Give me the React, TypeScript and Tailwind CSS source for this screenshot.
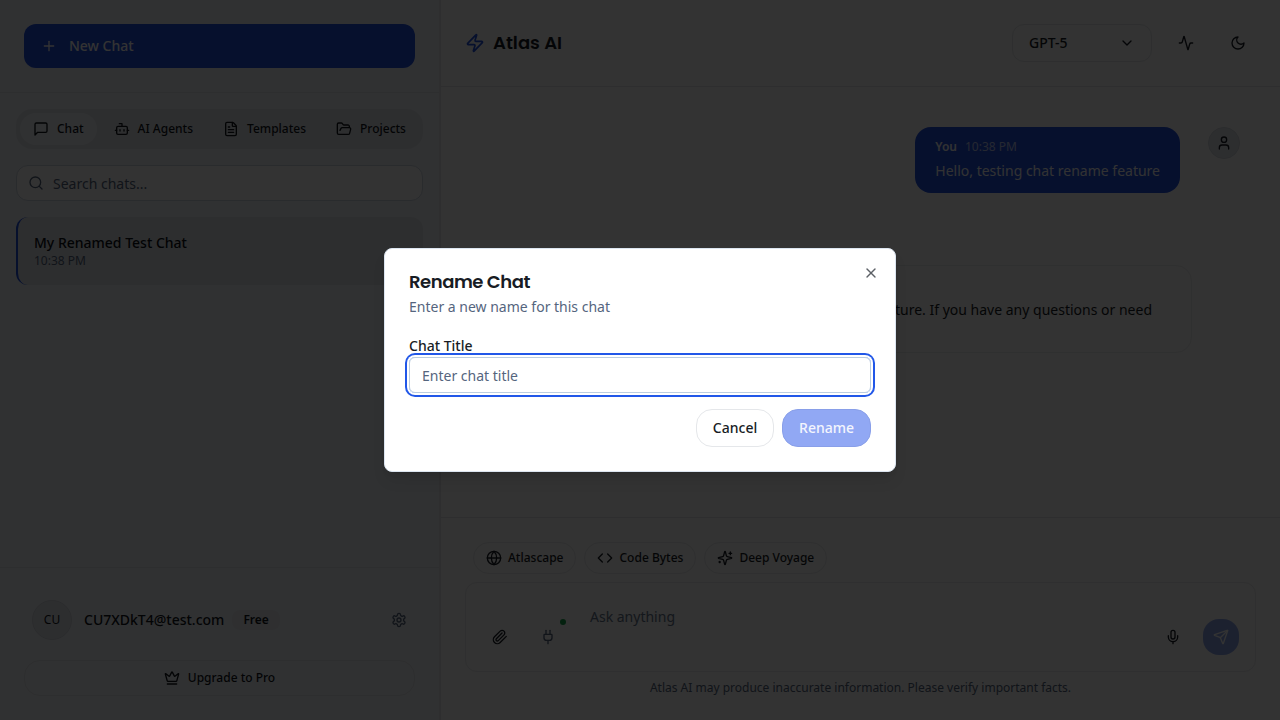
import type { ReactNode } from "react";
import { Activity, Bot, ChevronDown, Code, Crown, FileText, FolderOpen, Globe, Mic, Plug, Plus, Search, Send, User, X, Zap } from "lucide-react";

type IconProps = { className?: string };

function StrokeIcon({ className, children }: { className?: string; children: ReactNode }) {
  return (
    <svg className={className} viewBox="0 0 24 24" fill="none" stroke="currentColor" strokeWidth="2" strokeLinecap="round" strokeLinejoin="round">
      {children}
    </svg>
  );
}

const MessageIcon = ({ className }: IconProps) => (
  <StrokeIcon className={className}>
    <path d="M21 15a2 2 0 0 1-2 2H7l-4 4V5a2 2 0 0 1 2-2h14a2 2 0 0 1 2 2z" />
  </StrokeIcon>
);

const ClipIcon = ({ className }: IconProps) => (
  <StrokeIcon className={className}>
    <path d="m21.44 11.05-9.19 9.19a6 6 0 0 1-8.49-8.49l8.57-8.57A4 4 0 1 1 18 8.84l-8.59 8.57a2 2 0 0 1-2.83-2.83l8.49-8.48" />
  </StrokeIcon>
);

const MoonIcon = ({ className }: IconProps) => (
  <StrokeIcon className={className}>
    <path d="M12 3a6 6 0 0 0 9 9 9 9 0 1 1-9-9Z" />
  </StrokeIcon>
);

const GearIcon = ({ className }: IconProps) => (
  <StrokeIcon className={className}>
    <path d="M12.22 2h-.44a2 2 0 0 0-2 2v.18a2 2 0 0 1-1 1.73l-.43.25a2 2 0 0 1-2 0l-.15-.08a2 2 0 0 0-2.73.73l-.22.38a2 2 0 0 0 .73 2.73l.15.1a2 2 0 0 1 1 1.72v.51a2 2 0 0 1-1 1.74l-.15.09a2 2 0 0 0-.73 2.73l.22.38a2 2 0 0 0 2.73.73l.15-.08a2 2 0 0 1 2 0l.43.25a2 2 0 0 1 1 1.73V20a2 2 0 0 0 2 2h.44a2 2 0 0 0 2-2v-.18a2 2 0 0 1 1-1.73l.43-.25a2 2 0 0 1 2 0l.15.08a2 2 0 0 0 2.73-.73l.22-.39a2 2 0 0 0-.73-2.73l-.15-.08a2 2 0 0 1-1-1.74v-.5a2 2 0 0 1 1-1.74l.15-.09a2 2 0 0 0 .73-2.73l-.22-.38a2 2 0 0 0-2.73-.73l-.15.08a2 2 0 0 1-2 0l-.43-.25a2 2 0 0 1-1-1.73V4a2 2 0 0 0-2-2z" />
    <circle cx="12" cy="12" r="3" />
  </StrokeIcon>
);

const SparkleIcon = ({ className }: IconProps) => (
  <StrokeIcon className={className}>
    <path d="M9.937 15.5A2 2 0 0 0 8.5 14.063l-6.135-1.582a.5.5 0 0 1 0-.962L8.5 9.936A2 2 0 0 0 9.937 8.5l1.582-6.135a.5.5 0 0 1 .963 0L14.063 8.5A2 2 0 0 0 15.5 9.937l6.135 1.581a.5.5 0 0 1 0 .964L15.5 14.063a2 2 0 0 0-1.437 1.437l-1.582 6.135a.5.5 0 0 1-.963 0z" />
    <path d="M20 3v4M22 5h-4M4 17v2M5 18H3" />
  </StrokeIcon>
);

const tabs = [
  { label: "Chat", icon: MessageIcon, active: true },
  { label: "AI Agents", icon: Bot, active: false },
  { label: "Templates", icon: FileText, active: false },
  { label: "Projects", icon: FolderOpen, active: false },
];

function Sidebar() {
  return (
    <aside className="flex h-full w-[441px] shrink-0 flex-col border-r-2 border-[#e5e7eb] bg-[#f1f5f9]">
      <div className="border-b border-[#e2e5ea] p-6">
        <button className="flex h-11 w-full items-center gap-3 rounded-xl bg-[#1f4fe2] px-[17px] text-sm font-medium text-white">
          <Plus className="size-4" />
          New Chat
        </button>
      </div>
      <div className="flex flex-1 flex-col gap-4 p-4">
        <div className="flex h-10 items-center gap-1 rounded-2xl bg-[#e2e6ec] p-1">
          {tabs.map((t) => (
            <button key={t.label} className={`flex h-8 shrink-0 items-center justify-center gap-2 rounded-2xl px-[13px] text-xs font-medium text-[#12161c] ${t.active ? "bg-[#f1f5f9]" : ""}`}>
              <t.icon className="size-4" />
              {t.label}
            </button>
          ))}
        </div>
        <div className="flex h-9 items-center rounded-xl border border-[#cbd5e1] bg-white px-3 text-sm text-[#55657e]">
          <Search className="-ml-px size-4" />
          <span className="ml-[9px] pt-0.5">Search chats...</span>
        </div>
        <div className="flex h-[68px] flex-col justify-center rounded-xl border-l-2 border-[#1f4fe2] bg-[#e2e6ec] px-4">
          <span className="text-sm font-medium leading-5 text-[#0c1017]">My Renamed Test Chat</span>
          <span className="text-xs text-[#55657e]">10:38 PM</span>
        </div>
      </div>
      <div className="flex h-[153px] shrink-0 flex-col gap-3 border-t border-[#e2e5ea] p-6">
        <div className="flex h-14 items-center px-2">
          <span className="flex size-10 items-center justify-center rounded-full border border-[#d3d8df] bg-[#e2e6ec] text-xs text-[#12161c]">CU</span>
          <span className="ml-3 text-sm font-medium text-[#12161c]">CU7XDkT4@test.com</span>
          <span className="ml-2 flex h-5 items-center rounded-lg bg-[#e8ebef] px-[11px] text-xs font-semibold text-[#12161c]">Free</span>
          <GearIcon className="ml-auto size-4 text-[#55657e]" />
        </div>
        <button className="flex h-9 shrink-0 items-center justify-center gap-2 rounded-2xl border border-[#e0e3e8] text-xs font-medium text-[#12161c]">
          <Crown className="size-4" />
          Upgrade to Pro
        </button>
      </div>
    </aside>
  );
}

function Header() {
  return (
    <header className="flex h-[87px] shrink-0 items-center border-b border-[#e5e7eb] px-6">
      <Zap className="size-5 text-[#1f4fe2]" />
      <h1 className="ml-2 whitespace-nowrap font-[Poppins,Inter,sans-serif] text-lg font-semibold text-[#181c24]">Atlas AI</h1>
      <button className="ml-auto flex h-[38px] w-[140px] items-center justify-between rounded-xl border border-[#e5e7eb] px-4 text-sm font-medium text-[#181c24]">
        GPT-5
        <ChevronDown className="size-4" />
      </button>
      <button className="ml-4 flex size-9 items-center justify-center text-[#181c24]"><Activity className="size-4" /></button>
      <button className="ml-4 flex size-9 items-center justify-center text-[#181c24]"><MoonIcon className="size-4" /></button>
    </header>
  );
}

function Messages() {
  return (
    <section className="flex flex-1 flex-col pr-10 pt-10">
      <div className="flex justify-end gap-7">
        <div className="h-[66px] w-[265px] rounded-2xl bg-[#1f4fe2] pl-[20.3px] pt-3 text-[#f8fafc]">
          <div className="flex gap-2 text-xs leading-4">
            <span className="font-semibold">You</span>
            <span className="opacity-70">10:38 PM</span>
          </div>
          <p className="mt-1 whitespace-nowrap text-sm leading-[23px]">Hello, testing chat rename feature</p>
        </div>
        <span className="flex size-8 items-center justify-center rounded-full border border-[#d5dae1] bg-[#e2e6ec] text-[#181c24]"><User className="size-4" /></span>
      </div>
      <div className="mr-12 mt-[72px] flex h-[88px] w-[640px] justify-end self-end rounded-2xl border border-[#eceef0] px-[39px] pt-8">
        <p className="whitespace-nowrap text-sm leading-[23px] text-[#181c24]">Great, I can help you test the chat rename feature. If you have any questions or need</p>
      </div>
    </section>
  );
}

const chips = [
  { label: "Atlascape", icon: Globe },
  { label: "Code Bytes", icon: Code },
  { label: "Deep Voyage", icon: SparkleIcon },
];

function Composer() {
  return (
    <footer className="flex h-[203px] shrink-0 flex-col border-t border-[#e5e7eb] px-6 pt-6">
      <div className="flex gap-2 pl-2">
        {chips.map((c) => (
          <button key={c.label} className="flex h-8 items-center gap-1.5 rounded-2xl border border-[#e8eaed] px-3 text-xs font-medium text-[#181c24]">
            <c.icon className="size-4" />
            {c.label}
          </button>
        ))}
      </div>
      <div className="mt-2 flex h-[90px] shrink-0 items-end rounded-xl border border-[#e8eaed] px-4 pb-4">
        <button className="flex size-9 items-center justify-center text-[#181c24]"><ClipIcon className="size-4" /></button>
        <button className="relative ml-3 flex size-9 items-center justify-center text-[#55657e]">
          <Plug className="size-4" />
          <i className="absolute right-0 top-0 size-1.5 rounded-full bg-[#16a34a]" />
        </button>
        <span className="ml-6 flex-1 self-start pt-[22px] text-sm leading-[23px] text-[#64748b]">Ask anything</span>
        <button className="flex size-9 items-center justify-center text-[#181c24]"><Mic className="size-4" /></button>
        <button className="ml-3 flex size-9 items-center justify-center rounded-2xl bg-[#8ea6ec] text-white"><Send className="size-4" /></button>
      </div>
      <p className="mt-2 text-center text-xs text-[#55657e]">Atlas AI may produce inaccurate information. Please verify important facts.</p>
    </footer>
  );
}

function RenameDialog() {
  return (
    <div className="absolute inset-0 flex items-center justify-center bg-black/80">
      <div role="dialog" className="relative h-56 w-[512px] rounded-lg border border-[#dce5f0] bg-white p-6 shadow-lg">
        <X className="absolute right-4 top-4 size-4 text-[#5c6066]" />
        <h2 className="whitespace-nowrap font-[Poppins,Inter,sans-serif] text-lg font-semibold leading-[18px] tracking-tight text-[#181c24]">Rename Chat</h2>
        <p className="mt-1.5 text-sm leading-5 text-[#55657e]">Enter a new name for this chat</p>
        <div className="mt-[22px] flex flex-col">
          <label className="text-sm font-medium leading-[14px] text-[#181c24]">Chat Title</label>
          <input aria-label="Chat Title" placeholder="Enter chat title" className="mt-1 h-9 rounded-md border border-[#bccde0] px-3 text-sm outline-none ring-2 ring-[#2157e8] ring-offset-2 placeholder:text-[#55657e]" />
        </div>
        <div className="mt-4 flex justify-end gap-2">
          <button className="h-[38px] rounded-2xl border border-[#e5e7ea] px-[15.8px] text-sm font-medium text-[#181c24]">Cancel</button>
          <button className="h-[38px] rounded-2xl border border-[#899fe9] bg-[#91a8f4] px-4 text-sm font-medium text-[#f3f5fd]">Rename</button>
        </div>
      </div>
    </div>
  );
}

export default function App() {
  return (
    <div className="relative flex h-screen w-screen overflow-hidden bg-[#fdfdfd] font-['Noto_Sans',sans-serif]">
      <Sidebar />
      <main className="flex min-w-0 flex-1 flex-col">
        <Header />
        <Messages />
        <Composer />
      </main>
      <RenameDialog />
    </div>
  );
}
